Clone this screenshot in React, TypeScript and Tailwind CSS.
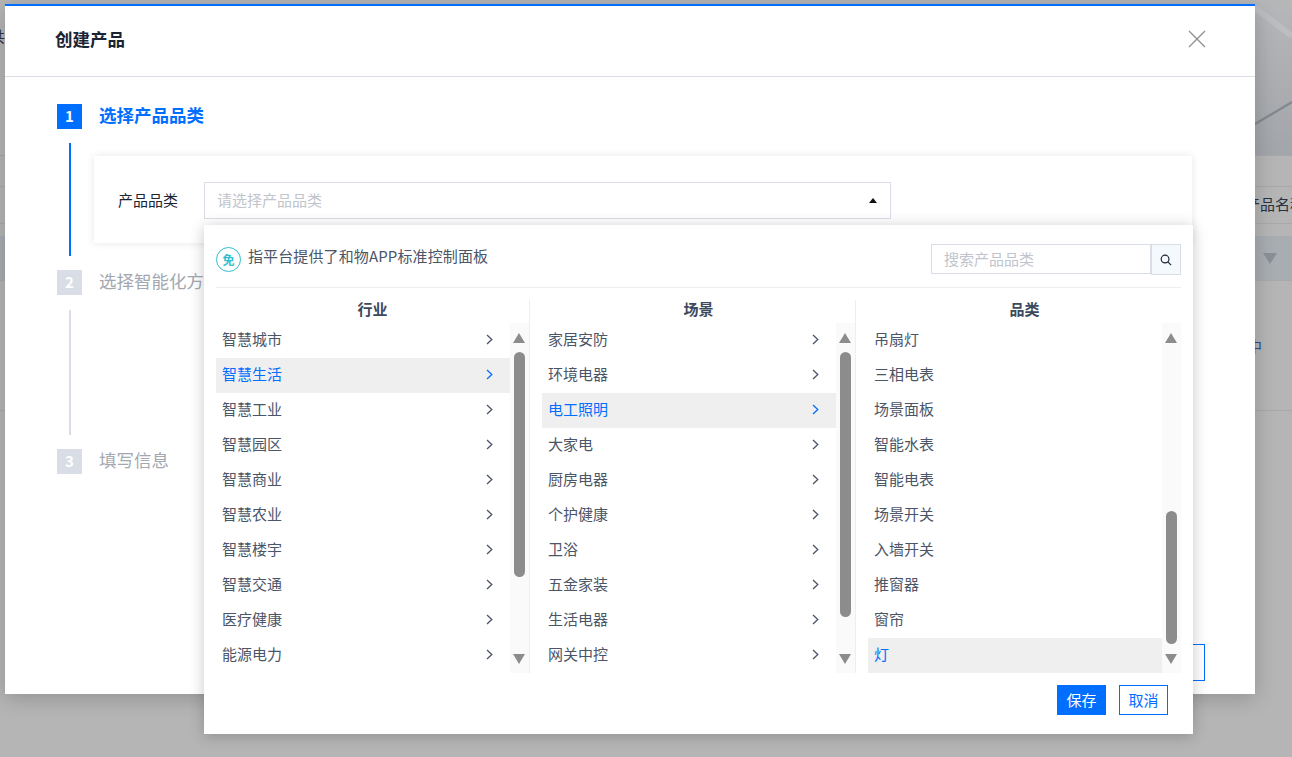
const columns = [
  {
    title: '行业',
    items: ['智慧城市', '智慧生活', '智慧工业', '智慧园区', '智慧商业', '智慧农业', '智慧楼宇', '智慧交通', '医疗健康', '能源电力'],
    active: '智慧生活',
    chevron: true,
    thumbTop: 'mt-[29px]',
    thumbH: 'h-[225px]',
  },
  {
    title: '场景',
    items: ['家居安防', '环境电器', '电工照明', '大家电', '厨房电器', '个护健康', '卫浴', '五金家装', '生活电器', '网关中控'],
    active: '电工照明',
    chevron: true,
    thumbTop: 'mt-[29px]',
    thumbH: 'h-[265px]',
  },
  {
    title: '品类',
    items: ['吊扇灯', '三相电表', '场景面板', '智能水表', '智能电表', '场景开关', '入墙开关', '推窗器', '窗帘', '灯'],
    active: '灯',
    chevron: false,
    thumbTop: 'mt-[188px]',
    thumbH: 'h-[133px]',
  },
];

function Chevron({ active }: { active: boolean }) {
  return (
    <svg width="7" height="11" viewBox="0 0 7 11" fill="none" className={active ? 'text-[#006eff]' : 'text-[#4a5568]'}>
      <path d="M1 1l4.8 4.5L1 10" stroke="currentColor" strokeWidth="1.3" />
    </svg>
  );
}

function Column({ col, last }: { col: (typeof columns)[number]; last: boolean }) {
  return (
    <div className={last ? 'w-[313px]' : 'w-[314px] mr-3 border-r border-[#eeeeee]'}>
      <div className="h-[23px] text-center text-[15px] leading-[18px] font-bold text-[#3d4a5c]">{col.title}</div>
      <div className="flex h-[350px]">
        <div className="flex-1">
          {col.items.map((item) => {
            const active = item === col.active;
            return (
              <div
                key={item}
                className={`flex h-[35px] items-center justify-between pb-[2px] pl-1.5 pr-[17px] text-[15px] ${
                  active ? 'bg-[#efefef] text-[#006eff]' : 'text-[#4a5568]'
                }`}
              >
                <span>{item}</span>
                {col.chevron && <Chevron active={active} />}
              </div>
            );
          })}
        </div>
        {/* scrollbar */}
        <div className="relative w-[19px] bg-[#fafafa]">
          <div className="absolute left-[3px] top-[10px] h-0 w-0 border-x-[6.5px] border-b-[10px] border-x-transparent border-b-[#8c8c8c]" />
          <div className={`ml-1 w-[11px] rounded-full bg-[#8c8c8c] ${col.thumbTop} ${col.thumbH}`} />
          <div className="absolute bottom-[9px] left-[3px] h-0 w-0 border-x-[6.5px] border-t-[10px] border-x-transparent border-t-[#8c8c8c]" />
        </div>
      </div>
    </div>
  );
}

function CategoryDropdown() {
  return (
    <div className="absolute left-0 top-[43px] z-10 h-[509px] w-[989px] bg-white px-3 shadow-[0_2px_14px_rgba(0,0,0,0.22)]">
      <div className="flex h-[63px] items-center justify-between border-b border-[#eeeeee] pt-[7px]">
        <div className="flex items-center gap-[7px]">
          <span className="flex h-[25px] w-[25px] items-center justify-center rounded-full border-[1.5px] border-[#2fbfcf] text-[12px] font-bold text-[#2fbfcf]">
            免
          </span>
          <span className="-mt-[6px] text-[15px] tracking-[0.12px] text-[#4a5568]">指平台提供了和物APP标准控制面板</span>
        </div>
        <div className="flex">
          <div className="flex h-[30px] w-[220px] items-center border border-[#d8dde6] pl-3 text-[15px] text-[#c0c4cc]">
            搜索产品品类
          </div>
          <div className="flex h-[31px] w-[30px] items-center justify-center border border-[#d8dde6] bg-[#f4f9fd]">
            <svg width="12" height="12" viewBox="0 0 13 13" fill="none" stroke="#1a2433" strokeWidth="1.3">
              <circle cx="5.5" cy="5.5" r="4.2" />
              <path d="M8.6 8.6L12 12" />
            </svg>
          </div>
        </div>
      </div>
      <div className="mt-3 flex">
        {columns.map((col, i) => (
          <Column key={col.title} col={col} last={i === columns.length - 1} />
        ))}
      </div>
      <div className="mt-3 flex justify-end gap-[13px] pr-[13px]">
        <button className="h-[30px] w-[49px] bg-[#006eff] text-[15px] text-white">保存</button>
        <button className="h-[30px] w-[49px] border border-[#006eff] bg-white text-[15px] text-[#006eff]">取消</button>
      </div>
    </div>
  );
}

function StepHead({ n, title, active }: { n: number; title: string; active?: boolean }) {
  return (
    <div className="flex h-[25px] items-center gap-[17px]">
      <span
        className={`flex h-[25px] w-[25px] items-center justify-center text-[15px] font-bold text-white ${
          active ? 'bg-[#006eff]' : 'bg-[#d9dee6]'
        }`}
      >
        {n}
      </span>
      <span className={active ? 'pb-[2px] text-[17.5px] font-bold text-[#006eff]' : 'pb-[2px] text-[17.5px] text-[#a3a8b0]'}>
        {title}
      </span>
    </div>
  );
}

function Modal() {
  return (
    <div className="absolute left-[5px] top-1 z-10 flex h-[690px] w-[1250px] flex-col border-t-2 border-[#006eff] bg-white shadow-[0_4px_20px_rgba(0,0,0,0.2)]">
      <div className="flex h-[71px] shrink-0 items-center justify-between border-b border-[#d8dde6] pl-[50px] pr-[49px]">
        <h1 className="-mt-1 text-[17.5px] font-bold text-[#1a2433]">创建产品</h1>
        <svg width="18" height="18" viewBox="0 0 18 18" fill="none" stroke="#8f8f8f" strokeWidth="1.3" className="-mt-1">
          <path d="M1 1l16 16M17 1L1 17" />
        </svg>
      </div>
      <div className="flex-1 pl-[52px] pr-[63px] pt-[27px]">
        <StepHead n={1} title="选择产品品类" active />
        <div className="my-[14px] ml-3 flex h-[113px] gap-[23px]">
          <div className="w-0.5 bg-[#006eff]" />
          <div className="mt-[13px] flex h-[87px] flex-1 items-center bg-white pl-6 pt-[2px] shadow-[0_0_8px_rgba(0,0,0,0.1)]">
            <span className="w-[86px] text-[15px] text-[#1a2433]">产品品类</span>
            <div className="relative">
              <div className="flex h-[37px] w-[687px] items-center justify-between border border-[#d8dde6] pl-3 pr-[13px] text-[15px] text-[#c0c4cc]">
                请选择产品品类
                <span className="h-0 w-0 border-x-[4px] border-b-[5px] border-x-transparent border-b-[#111111]" />
              </div>
              <CategoryDropdown />
            </div>
          </div>
        </div>
        <StepHead n={2} title="选择智能化方式" />
        <div className="my-[15px] mb-[14px] ml-3 h-[125px] w-0.5 bg-[#d9dee6]" />
        <StepHead n={3} title="填写信息" />
      </div>
      <div className="flex justify-end pb-[13px] pr-[50px]">
        <button className="h-[37px] w-[100px] border border-[#006eff] text-[15px] text-[#006eff]">取消</button>
      </div>
    </div>
  );
}

function PageBehind() {
  return (
    <div className="flex h-full flex-col bg-[#b5b5b5] text-[15px] text-[#27313f]">
      <div className="relative h-[156px] overflow-hidden border-b border-[#a8a8a8] pt-[25px]">
        <svg className="absolute inset-0" width="1292" height="155" viewBox="0 0 1292 155">
          <defs>
            <linearGradient id="hero" x1="0" y1="0" x2="0" y2="1">
              <stop offset="0" stopColor="#b6b7b9" />
              <stop offset="1" stopColor="#a2a5aa" />
            </linearGradient>
          </defs>
          <rect x="1240" width="52" height="155" fill="url(#hero)" />
          <path d="M1255 124L1292 102" stroke="#858990" strokeWidth="2.5" />
          <path d="M1255 8L1292 36" stroke="#bbbdc0" strokeWidth="6" />
        </svg>
        <span className="relative -ml-[10px]">共</span>
      </div>
      <div className="mt-[30px] flex h-[38px] justify-end overflow-hidden border-y border-[#a9a9a9] pt-[6px] whitespace-nowrap">
        <span className="w-[47px] overflow-hidden">产品名称</span>
      </div>
      <div className="mt-3 flex h-[45px] items-center justify-end border-b border-[#a9a9a9] bg-[#a8adb2] pr-[15px]">
        <span className="h-0 w-0 border-x-[7px] border-t-[11px] border-x-transparent border-t-[#8c9096]" />
      </div>
      <div className="flex h-[130px] justify-end border-b border-[#a9a9a9] pr-[30px] pt-[54px] text-[#24509a]">
        <span>中</span>
      </div>
    </div>
  );
}

export default function App() {
  return (
    <div className="relative h-[757px] w-[1292px] overflow-hidden font-['Noto_Sans_CJK_SC','Liberation_Sans',sans-serif]">
      <PageBehind />
      <Modal />
    </div>
  );
}
